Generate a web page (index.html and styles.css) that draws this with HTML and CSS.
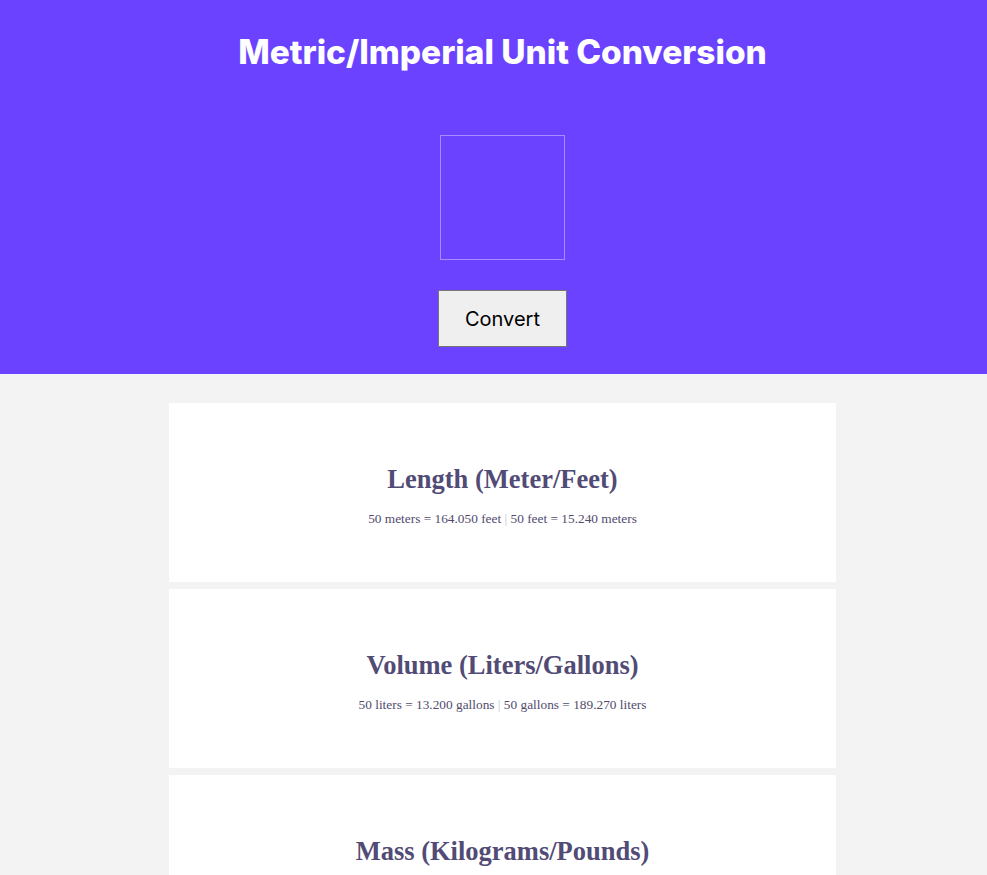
FILE: index.html
```html
<!DOCTYPE html>
<html>
<head>
<meta charset="utf-8">
<link rel="stylesheet" href="styles.css">
</head>
<body>
<header class="hero">
  <h1 class="hero-title">Metric/Imperial Unit Conversion</h1>
  <input class="hero-input" type="text">
  <button class="hero-button">Convert</button>
</header>
<main class="results">
  <section class="card">
    <h2 class="card-title">Length (Meter/Feet)</h2>
    <p class="card-text">50 meters = 164.050 feet <span class="sep">|</span> 50 feet = 15.240 meters</p>
  </section>
  <section class="card">
    <h2 class="card-title">Volume (Liters/Gallons)</h2>
    <p class="card-text">50 liters = 13.200 gallons <span class="sep">|</span> 50 gallons = 189.270 liters</p>
  </section>
  <section class="card">
    <h2 class="card-title">Mass (Kilograms/Pounds)</h2>
    <p class="card-text">50 kilos = 110.250 pounds <span class="sep">|</span> 50 pounds = 22.675 kilos</p>
  </section>
</main>
</body>
</html>
```
FILE: styles.css
```css
html, body {
  margin: 0;
  padding: 0;
}
body {
  background: #f3f3f3;
  font-family: "Liberation Serif", serif;
}
.hero {
  background: #6b42ff;
  display: flex;
  flex-direction: column;
  align-items: center;
  padding: 31px 0 27px 18px;
}
.hero-title {
  margin: 0;
  font-family: Inter, sans-serif;
  font-weight: 800;
  font-size: 33.4px;
  line-height: 42px;
  color: #ffffff;
}
.hero-input {
  box-sizing: border-box;
  width: 125px;
  height: 125px;
  margin-top: 62px;
  background: transparent;
  border: 1px solid #a58cff;
  outline: none;
  padding: 0;
}
.hero-button {
  box-sizing: border-box;
  width: 129px;
  height: 57px;
  margin-top: 30px;
  background: #efefef;
  border: 1px solid #767676;
  font-family: Inter, sans-serif;
  font-size: 20px;
  color: #000;
  padding: 0;
}
.results {
  display: flex;
  flex-direction: column;
  align-items: center;
  gap: 7px;
  padding: 29px 0 0 18px;
}
.card {
  box-sizing: border-box;
  width: 667px;
  height: 179px;
  background: #ffffff;
  padding-top: 61px;
  text-align: center;
}
.card-title {
  margin: 0 0 18px;
  font-size: 26.5px;
  line-height: 30px;
  font-weight: 700;
  color: #514b75;
}
.card-text {
  margin: 0;
  font-size: 13.33px;
  line-height: 14px;
  color: #514b6e;
}
.sep {
  color: #c2c8d8;
}
```
